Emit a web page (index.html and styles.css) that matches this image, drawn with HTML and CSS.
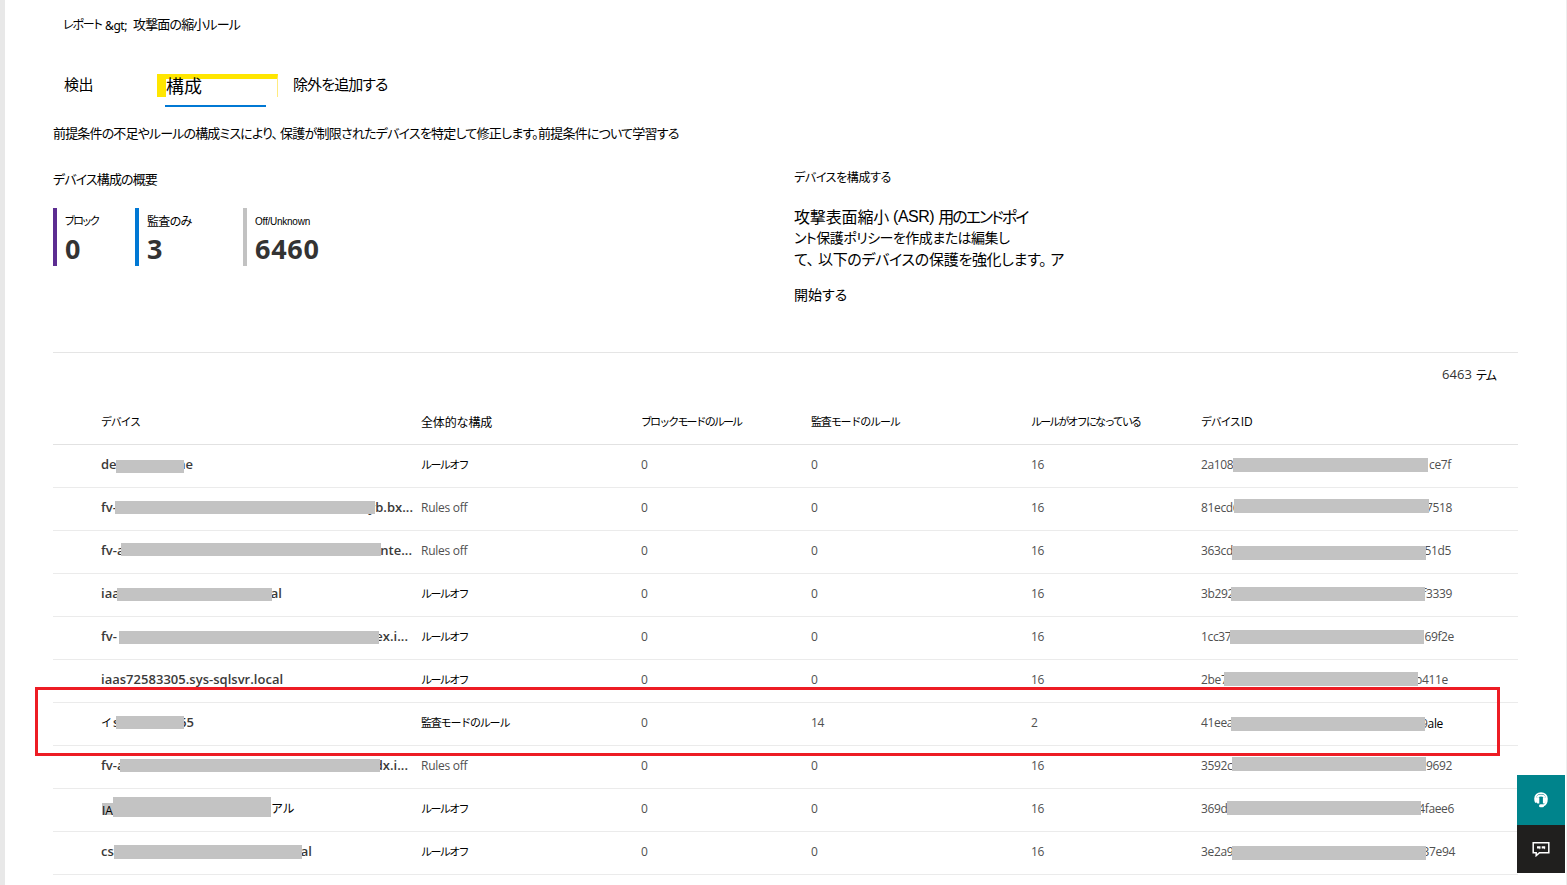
FILE: index.html
```
<!DOCTYPE html>
<html lang="ja">
<head>
<meta charset="utf-8">
<title>攻撃面の縮小ルール</title>
<link rel="stylesheet" href="styles.css">
</head>
<body>
<div class="page">
  <nav class="crumbs"><span class="crumb-a">レポート</span><span class="crumb-sep">&amp;gt;</span><span class="crumb-b">攻撃面の縮小ルール</span></nav>
  <div class="tabs">
    <span class="tab tab-detect">検出</span>
    <span class="tab tab-config">構成</span>
    <span class="tab tab-exclude">除外を追加する</span>
  </div>
  <p class="intro"><span class="intro-a">前提条件の不足やルールの構成ミスにより、</span><span class="intro-b">保護が制限されたデバイスを特定して修正します。</span><span class="intro-c">前提条件について学習する</span></p>
  <div class="panels">
    <section class="overview">
      <h2 class="overview-title">デバイス構成の概要</h2>
      <div class="stats">
        <div class="stat stat-block"><span class="stat-label">ブロック</span><strong>0</strong></div>
        <div class="stat stat-audit"><span class="stat-label">監査のみ</span><strong>3</strong></div>
        <div class="stat stat-off"><span class="stat-label">Off/Unknown</span><strong>6460</strong></div>
      </div>
    </section>
    <section class="setup">
      <h2 class="setup-title">デバイスを構成する</h2>
      <p class="line line-1"><span>攻撃表面縮小</span><span class="asr">(ASR)</span><span>用のエンドポイ</span></p>
      <p class="line line-2">ント保護ポリシーを作成または編集し</p>
      <p class="line line-3"><span>て、</span><span>以下のデバイスの保護を強化します。</span><span>ア</span></p>
      <a class="start">開始する</a>
    </section>
  </div>
  <div class="count"><span class="count-num">6463</span><span class="count-unit">テム</span></div>
  <div class="table">
    <div class="row head"><span class="h1">デバイス</span><span class="h2">全体的な構成</span><span class="h3">ブロックモードのルール</span><span class="h4">監査モードのルール</span><span class="h5">ルールがオフになっている</span><span class="h6">デバイス <span class="latin">ID</span></span></div>
    <div class="row"><span class="name mask n1"><b>de</b><i></i><b>ne</b></span><span class="jp">ルールオフ</span><span>0</span><span>0</span><span>16</span><span class="id mask d1"><b>2a108</b><i></i><b>ce7f</b></span></div>
    <div class="row"><span class="name mask n2"><b>fv-</b><i></i><b>yb.bx...</b></span><span class="en">Rules off</span><span>0</span><span>0</span><span>16</span><span class="id mask d2"><b>81ecd6</b><i></i><b>7518</b></span></div>
    <div class="row"><span class="name mask n3"><b>fv-a</b><i></i><b>nte...</b></span><span class="en">Rules off</span><span>0</span><span>0</span><span>16</span><span class="id mask d3"><b>363cd</b><i></i><b>51d5</b></span></div>
    <div class="row"><span class="name mask n4"><b>iaa</b><i></i><b>al</b></span><span class="jp">ルールオフ</span><span>0</span><span>0</span><span>16</span><span class="id mask d4"><b>3b292</b><i></i><b>f3339</b></span></div>
    <div class="row"><span class="name mask n5"><b>fv-</b><i></i><b>ex.i...</b></span><span class="jp">ルールオフ</span><span>0</span><span>0</span><span>16</span><span class="id mask d5"><b>1cc37</b><i></i><b>69f2e</b></span></div>
    <div class="row"><span class="name">iaas72583305.sys-sqlsvr.local</span><span class="jp">ルールオフ</span><span>0</span><span>0</span><span>16</span><span class="id mask d6"><b>2be7</b><i></i><b>b411e</b></span></div>
    <div class="row"><span class="name mask n7"><b><em>イ</em>s</b><i></i><b>65</b></span><span class="jp audit">監査モードのルール</span><span>0</span><span>14</span><span>2</span><span class="id mask d7"><b>41eea</b><i></i><b>9<em>ale</em></b></span></div>
    <div class="row"><span class="name mask n8"><b>fv-a</b><i></i><b>dx.i...</b></span><span class="en">Rules off</span><span>0</span><span>0</span><span>16</span><span class="id mask d8"><b>3592c</b><i></i><b>9692</b></span></div>
    <div class="row"><span class="name mask n9"><b class="chip">IA</b><i></i><b class="kana">アル</b></span><span class="jp">ルールオフ</span><span>0</span><span>0</span><span>16</span><span class="id mask d9"><b>369d</b><i></i><b>4faee6</b></span></div>
    <div class="row"><span class="name mask n10"><b>cs</b><i></i><b>al</b></span><span class="jp">ルールオフ</span><span>0</span><span>0</span><span>16</span><span class="id mask d10"><b>3e2a9</b><i></i><b>37e94</b></span></div>
  </div>
  <div class="highlight"></div>
  <div class="dock">
    <div class="dock-help">
      <svg width="14" height="16" viewBox="0 0 14 16"><path class="band" d="M2 10.500C1.400 9.500 1.100 8.200 1.100 6.800 1.100 3.400 3.600 1.200 7 1.200S12.900 3.400 12.900 6.800C12.900 10.500 11.500 12.800 9 13.600"/><path class="solid" d="M2 5.500C2.500 3.600 4.500 2.500 7 2.500S11.500 3.600 12 5.500L9.200 6V5C8 4.200 6 4.200 4.800 5V6z"/><path class="solid" d="M2 5.500H5.300V11.500H3.500C2.500 11 2 10 2 9zM12 5.500H8.900V11.500H11.300C11.800 10.800 12 10 12 9z"/><rect class="solid" x="5" y="12.200" width="5" height="3" rx="1.500"/></svg>
    </div>
    <div class="dock-chat">
      <svg width="18" height="16" viewBox="0 0 18 16"><path class="outline" d="M1.200 1.700H16.800V11.700H7.500L4.200 14.600V11.700H1.200Z"/><path class="solid" d="M5 5.200h3.500v2.300L7.500 8.400V7.500H5zM9.700 5.200h3.500v2.300L12.200 8.400V7.500H9.700z"/></svg>
    </div>
  </div>
</div>
</body>
</html>
```
FILE: styles.css
```
* { box-sizing: border-box; }
body {
  margin: 0;
  background: #fff;
  color: #000;
  font-family: "Noto Sans CJK JP", sans-serif;
  font-size: 13px;
  font-weight: 400;
  font-feature-settings: "palt";
  overflow: hidden;
}
h2, p { margin: 0; font-size: 13px; font-weight: 400; }
span, h2, p, a, strong, b { white-space: nowrap; }
b, i, em { font-weight: inherit; font-style: normal; }

.page {
  position: relative;
  height: 885px;
  padding: 0 48px;
  border-left: 5px solid #e8e8e8;
  border-right: 1px solid #eee;
}

/* breadcrumb and tabs */
.crumbs { display: flex; height: 50px; line-height: 48px; padding-left: 10px; }
.crumb-a { width: 42px; font-size: 12px; letter-spacing: -1.1px; }
.crumb-sep { width: 28px; font-family: "Noto Sans", sans-serif; font-size: 12px; letter-spacing: -0.4px; padding-top: 2px; }
.crumb-b { letter-spacing: -0.85px; }

.tabs { position: relative; display: flex; height: 57px; padding: 24px 0 0 11px; line-height: 19px; }
.tab-detect { width: 93px; font-size: 15px; letter-spacing: -0.5px; }
.tab-config {
  position: relative;
  width: 121px;
  height: 23px;
  border-top: 5px solid #ffe600;
  border-left: 9px solid #ffe600;
  border-right: 1px solid #ffeb80;
  font-size: 18px;
  line-height: 12px;
}
.tab-config::after {
  content: "";
  position: absolute;
  left: -1px;
  top: 26px;
  width: 101px;
  height: 2px;
  background: #0078d4;
}
.tab-exclude { margin-left: 15px; font-size: 15px; letter-spacing: -0.9px; }

.intro { display: flex; height: 52px; line-height: 52px; }
.intro-a { width: 227px; letter-spacing: -0.85px; }
.intro-b { width: 258px; letter-spacing: -0.76px; }
.intro-c { letter-spacing: -0.78px; }

/* summary panels */
.panels { display: flex; height: 194px; border-bottom: 1px solid #e5e5e5; }
.overview { width: 741px; }
.overview-title { height: 49px; line-height: 39px; letter-spacing: -0.86px; }
.stats { display: flex; }
.stat { display: flex; flex-direction: column; height: 58px; padding-left: 8px; border-left: 4px solid; }
.stat-block { width: 82px; border-color: #5c2d91; }
.stat-audit { width: 108px; border-color: #0078d4; }
.stat-off { border-color: #c2c2c2; }
.stat-label { height: 25px; line-height: 25px; font-size: 12px; letter-spacing: -0.7px; }
.stat-block .stat-label { font-size: 11px; letter-spacing: -1.4px; }
.stat-off .stat-label { font-family: "Liberation Sans", sans-serif; font-size: 10px; letter-spacing: -0.24px; line-height: 27px; }
.stat strong { color: #333; font: 700 27px/32px "Open Sans", sans-serif; letter-spacing: 0.7px; }
.setup-title { height: 48px; line-height: 36px; font-size: 12px; letter-spacing: -0.36px; }
.line { display: flex; height: 21px; line-height: 19px; }
.line-1 { gap: 4px; font-size: 16px; letter-spacing: -0.15px; }
.line-1 span:last-child { letter-spacing: -2px; }
.line-1 .asr { font-family: "Liberation Sans", sans-serif; letter-spacing: -0.5px; line-height: 20px; }
.line-2 { font-size: 14px; letter-spacing: -0.5px; }
.line-3 { font-size: 15px; gap: 4px; letter-spacing: -0.3px; }
.start { display: block; margin-top: 8px; line-height: 32px; font-size: 14px; }

.count { display: flex; height: 44px; padding-left: 1389px; line-height: 43px; }
.count-num { width: 34px; color: #333; font-family: "Open Sans", sans-serif; letter-spacing: 0.1px; }
.count-unit { font-size: 12px; letter-spacing: -0.8px; }

/* device table */
.table { width: 1465px; }
.row {
  display: grid;
  grid-template-columns: 320px 220px 170px 220px 170px 1fr;
  height: 43px;
  padding-left: 48px;
  border-bottom: 1px solid #ebebeb;
  color: #505050;
  font: 12px/39px "Open Sans", sans-serif;
  letter-spacing: -0.35px;
}
.row.head {
  height: 48px;
  border-color: #e2e2e2;
  color: #000;
  font: 11px/49px "Noto Sans CJK JP", sans-serif;
}
.h1 { letter-spacing: -1.25px; }
.h2 { font-size: 12px; letter-spacing: -0.13px; }
.h3 { letter-spacing: -1.9px; }
.h4 { letter-spacing: -1.15px; }
.h5 { letter-spacing: -1.85px; }
.h6 { letter-spacing: -1.3px; }
.h6 .latin { font-family: "Open Sans", sans-serif; font-size: 12px; letter-spacing: 0; }
.en { letter-spacing: -0.28px; }
.jp { color: #000; font: 11px/38px "Noto Sans CJK JP", sans-serif; letter-spacing: -1.6px; }
.jp.audit { letter-spacing: -1.2px; }
.name { color: #3b3a39; font-size: 13px; font-weight: 600; line-height: 38px; letter-spacing: 0.02px; }

/* redacted values: text either side of a grey bar */
.mask { position: relative; display: flex; justify-content: space-between; width: var(--end); }
.mask i {
  position: absolute;
  left: var(--x);
  top: var(--y);
  width: var(--w);
  height: var(--h, 13px);
  background: #c3c3c3;
}
.id { --h: 14px; }
.mask em { color: #000; font-family: "Noto Sans CJK JP", sans-serif; font-weight: 400; font-size: 12px; }
.n1 { --end: 92px; --x: 15px; --y: 15px; --w: 68px; }
.n2 { --end: 312px; --x: 14px; --y: 13px; --w: 260px; }
.n3 { --end: 311px; --x: 20px; --y: 12px; --w: 260px; }
.n4 { --end: 181px; --x: 16px; --y: 14px; --w: 155px; }
.n5 { --end: 307px; --x: 18px; --y: 14px; --w: 260px; }
.n7 { --end: 93px; --x: 15px; --y: 13px; --w: 68px; }
.n8 { --end: 307px; --x: 19px; --y: 13px; --w: 260px; }
.n9 { --end: 193px; --x: 12px; --y: 8px; --w: 158px; --h: 20px; }
.n10 { --end: 211px; --x: 13px; --y: 13px; --w: 188px; --h: 14px; }
.d1 { --end: 250px; --x: 32px; --y: 13px; --w: 195px; }
.d2 { --end: 251px; --x: 33px; --y: 11px; --w: 195px; }
.d3 { --end: 250px; --x: 31px; --y: 15px; --w: 194px; }
.d4 { --end: 251px; --x: 30px; --y: 13px; --w: 194px; }
.d5 { --end: 253px; --x: 29px; --y: 13px; --w: 194px; }
.d6 { --end: 247px; --x: 23px; --y: 12px; --w: 194px; }
.d7 { --end: 242px; --x: 30px; --y: 14px; --w: 194px; }
.d8 { --end: 251px; --x: 31px; --y: 11px; --w: 194px; }
.d9 { --end: 253px; --x: 26px; --y: 12px; --w: 194px; }
.d10 { --end: 254px; --x: 31px; --y: 14px; --w: 194px; }
.n7 em { display: inline-block; width: 12px; line-height: 36px; font-size: 11px; }
.d7 em { font-family: "Open Sans", sans-serif; line-height: 41px; }
.chip { height: 12px; margin: 14px 0 0 1px; background: #c3c3c3; color: #000; font: 12px/15px "Open Sans", sans-serif; }
.kana { color: #000; font: 12px/38px "Noto Sans CJK JP", sans-serif; letter-spacing: -0.5px; }

/* overlays */
.highlight {
  position: absolute;
  left: 30px;
  top: 687px;
  width: 1465px;
  height: 69px;
  border: 3px solid #ed1c24;
}
.dock { position: absolute; right: 1px; top: 775px; width: 48px; }
.dock-help, .dock-chat { display: flex; align-items: center; justify-content: center; }
.dock-help { height: 50px; padding-bottom: 1px; background: #00848c; }
.dock-chat { height: 48px; background: #201f1e; }
.dock .solid { fill: #fff; stroke: none; }
.dock .band { fill: none; stroke: #fff; stroke-width: 1.8; }
.dock .outline { fill: none; stroke: #fff; stroke-width: 1.5; }
```
